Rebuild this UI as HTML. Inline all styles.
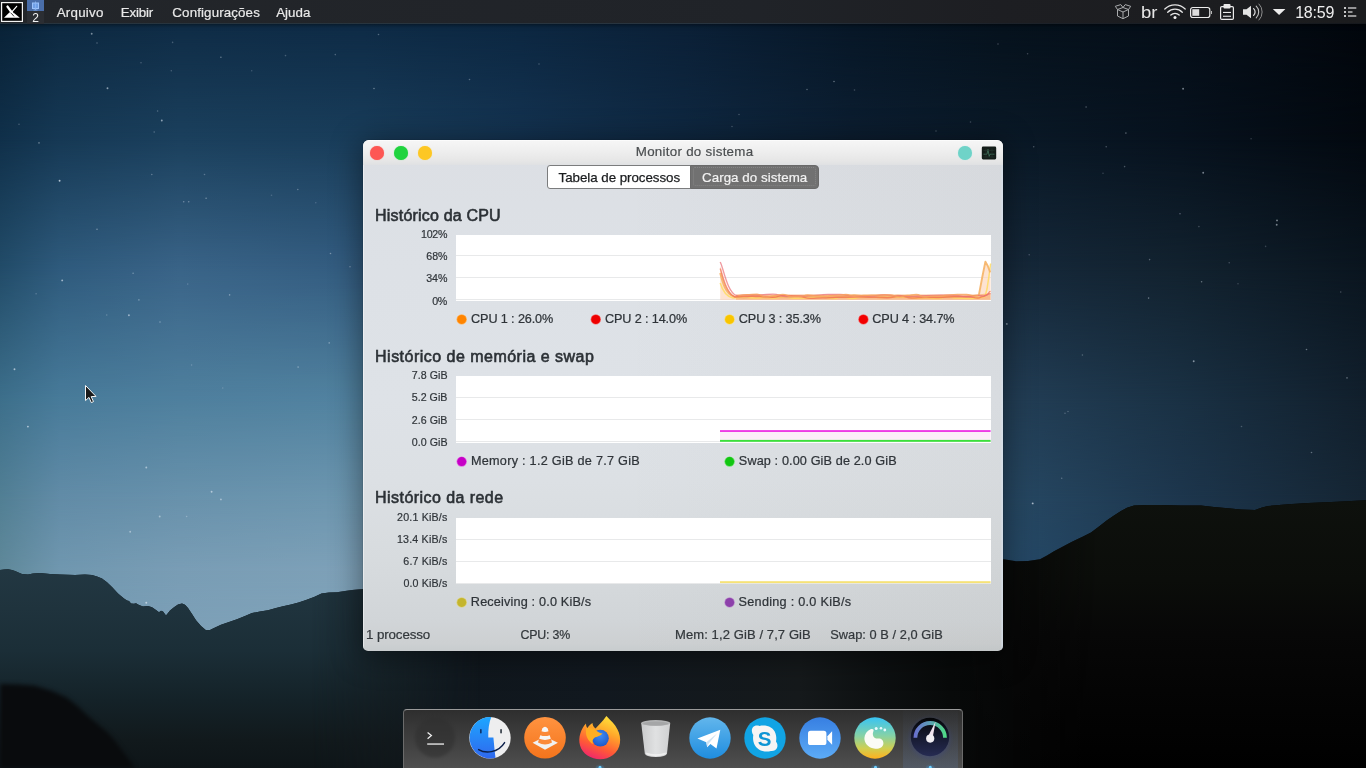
<!DOCTYPE html>
<html lang="pt-BR">
<head>
<meta charset="utf-8">
<title>Monitor do sistema</title>
<style>
html,body{margin:0;padding:0;}
body{width:1366px;height:768px;overflow:hidden;position:relative;background:#0a1622;font-family:"Liberation Sans","DejaVu Sans",sans-serif;font-size:13.33px;color:#31363b;}
#bg{position:absolute;left:0;top:0;width:1366px;height:768px;overflow:hidden;}
.sky{position:absolute;left:0;top:0;width:1366px;height:768px;}
.abs{position:absolute;}
.t{position:absolute;white-space:nowrap;line-height:1;}
#panel,#win,#dock{will-change:transform;}
</style>
</head>
<body>

<div id="bg">
<div class="sky" style="background:linear-gradient(to right, #092237 0px, #0d2941 60px, #0f2c46 180px, #0e2b46 363px, #0c2741 520px, #0b2037 683px, #071727 850px, #06121d 1003px, #050e18 1180px, #02060c 1366px);"></div>
<div class="sky" style="background:linear-gradient(to right, #10304a 0px, #163955 60px, #1b405d 180px, #193d5a 363px, #143351 520px, #0f2841 683px, #0c1e31 850px, #0a1927 1003px, #07121e 1180px, #030910 1366px);-webkit-mask-image:linear-gradient(to bottom, transparent 24px, #000 140px);mask-image:linear-gradient(to bottom, transparent 24px, #000 140px);"></div>
<div class="sky" style="background:linear-gradient(to right, #224c69 0px, #2f5b7d 60px, #3a6488 180px, #335c80 363px, #274f70 520px, #1c3d5a 683px, #172f46 850px, #16293b 1003px, #12222f 1180px, #0a151f 1366px);-webkit-mask-image:linear-gradient(to bottom, transparent 140px, #000 270px);mask-image:linear-gradient(to bottom, transparent 140px, #000 270px);"></div>
<div class="sky" style="background:linear-gradient(to right, #3d6f8b 0px, #487b9a 60px, #4f809e 180px, #5283a0 363px, #436f8d 520px, #305877 683px, #26465f 850px, #233f57 1003px, #1a3144 1180px, #111f2c 1366px);-webkit-mask-image:linear-gradient(to bottom, transparent 270px, #000 400px);mask-image:linear-gradient(to bottom, transparent 270px, #000 400px);"></div>
<div class="sky" style="background:linear-gradient(to right, #527f94 0px, #628ca7 60px, #6992ac 180px, #6e97b0 363px, #608aa6 520px, #47728f 683px, #305671 850px, #274964 1003px, #1d364d 1180px, #152533 1366px);-webkit-mask-image:linear-gradient(to bottom, transparent 400px, #000 500px);mask-image:linear-gradient(to bottom, transparent 400px, #000 500px);"></div>
<div class="sky" style="background:linear-gradient(to right, #5f8899 0px, #7097af 60px, #799db5 180px, #7ea1b8 363px, #7399b3 520px, #55809d 683px, #35607c 850px, #264a68 1003px, #1c3751 1180px, #152736 1366px);-webkit-mask-image:linear-gradient(to bottom, transparent 500px, #000 570px);mask-image:linear-gradient(to bottom, transparent 500px, #000 570px);"></div>
<div class="sky" style="background:linear-gradient(to right, #6b93a5 0px, #7fa2ba 60px, #86a8be 180px, #8aabc0 363px, #7fa2ba 520px, #5d87a3 683px, #38668a 850px, #284c6c 1003px, #1d3953 1180px, #162838 1366px);-webkit-mask-image:linear-gradient(to bottom, transparent 570px, #000 768px);mask-image:linear-gradient(to bottom, transparent 570px, #000 768px);"></div>
<svg class="abs" style="left:0;top:0" width="1366" height="768" viewBox="0 0 1366 768">
<defs>
<linearGradient id="mL" x1="0" y1="569" x2="0" y2="768" gradientUnits="userSpaceOnUse">
<stop offset="0" stop-color="#223742"/><stop offset="0.2" stop-color="#1f333d"/><stop offset="0.41" stop-color="#1b2e37"/><stop offset="0.66" stop-color="#142228"/><stop offset="0.86" stop-color="#11191c"/><stop offset="1" stop-color="#0e1518"/>
</linearGradient>
<linearGradient id="mH" x1="310" y1="0" x2="480" y2="0" gradientUnits="userSpaceOnUse">
<stop offset="0" stop-color="#fff"/><stop offset="1" stop-color="#000"/>
</linearGradient>
<linearGradient id="mB" x1="0" y1="0" x2="1366" y2="0" gradientUnits="userSpaceOnUse">
<stop offset="0" stop-color="#121a1f"/><stop offset="0.278" stop-color="#13191d"/><stop offset="0.33" stop-color="#10171d"/><stop offset="0.44" stop-color="#11181f"/><stop offset="0.585" stop-color="#15191b"/><stop offset="0.645" stop-color="#0d1011"/><stop offset="0.695" stop-color="#080a0a"/><stop offset="0.77" stop-color="#070707"/><stop offset="1" stop-color="#030303"/>
</linearGradient>
<linearGradient id="mR" x1="0" y1="500" x2="0" y2="768" gradientUnits="userSpaceOnUse">
<stop offset="0" stop-color="#0e110d"/><stop offset="0.3" stop-color="#0b0d0a"/><stop offset="0.5" stop-color="#070707"/><stop offset="1" stop-color="#000000"/>
</linearGradient>
<linearGradient id="mRH" x1="960" y1="0" x2="1100" y2="0" gradientUnits="userSpaceOnUse">
<stop offset="0" stop-color="#000"/><stop offset="1" stop-color="#fff"/>
</linearGradient>
<mask id="mkL" maskUnits="userSpaceOnUse" x="0" y="500" width="1366" height="268"><rect x="0" y="500" width="1366" height="268" fill="url(#mH)"/></mask>
<mask id="mkR" maskUnits="userSpaceOnUse" x="0" y="490" width="1366" height="278"><rect x="0" y="490" width="1366" height="278" fill="url(#mRH)"/></mask>
</defs>
<g fill="#dfe9f4">
<circle cx="91.7" cy="33.8" r="0.95" opacity="0.51"/>
<circle cx="97.0" cy="43.0" r="0.8" opacity="0.30"/>
<circle cx="172.6" cy="42.4" r="0.8" opacity="0.26"/>
<circle cx="220.9" cy="57.2" r="0.8" opacity="0.42"/>
<circle cx="141.0" cy="62.7" r="0.8" opacity="0.26"/>
<circle cx="171.3" cy="70.7" r="0.8" opacity="0.26"/>
<circle cx="285.5" cy="55.6" r="0.8" opacity="0.26"/>
<circle cx="335.3" cy="54.6" r="0.8" opacity="0.30"/>
<circle cx="107.5" cy="88.3" r="0.95" opacity="0.59"/>
<circle cx="157.6" cy="111.0" r="0.8" opacity="0.30"/>
<circle cx="161.8" cy="120.5" r="0.95" opacity="0.59"/>
<circle cx="154.2" cy="132.0" r="0.8" opacity="0.30"/>
<circle cx="19.0" cy="124.2" r="0.8" opacity="0.26"/>
<circle cx="39.0" cy="142.9" r="0.8" opacity="0.42"/>
<circle cx="59.6" cy="180.8" r="0.95" opacity="0.77"/>
<circle cx="151.8" cy="174.5" r="0.8" opacity="0.34"/>
<circle cx="204.5" cy="174.5" r="0.8" opacity="0.30"/>
<circle cx="183.7" cy="201.7" r="0.8" opacity="0.38"/>
<circle cx="188.7" cy="201.7" r="0.8" opacity="0.38"/>
<circle cx="206.1" cy="198.2" r="0.8" opacity="0.42"/>
<circle cx="297.8" cy="189.5" r="0.8" opacity="0.34"/>
<circle cx="271.5" cy="195.3" r="0.8" opacity="0.21"/>
<circle cx="315.8" cy="202.7" r="0.8" opacity="0.21"/>
<circle cx="251.7" cy="70.7" r="0.8" opacity="0.21"/>
<circle cx="97.0" cy="229.3" r="0.8" opacity="0.42"/>
<circle cx="62.2" cy="280.4" r="0.95" opacity="0.64"/>
<circle cx="133.1" cy="273.3" r="0.8" opacity="0.38"/>
<circle cx="138.9" cy="299.9" r="0.8" opacity="0.38"/>
<circle cx="128.9" cy="315.2" r="0.95" opacity="0.59"/>
<circle cx="160.0" cy="322.0" r="0.8" opacity="0.38"/>
<circle cx="229.6" cy="294.9" r="0.8" opacity="0.42"/>
<circle cx="330.5" cy="253.5" r="0.8" opacity="0.42"/>
<circle cx="350.0" cy="266.7" r="0.8" opacity="0.38"/>
<circle cx="329.2" cy="342.9" r="0.8" opacity="0.38"/>
<circle cx="298.1" cy="367.1" r="0.8" opacity="0.42"/>
<circle cx="14.5" cy="369.2" r="0.95" opacity="0.68"/>
<circle cx="191.6" cy="365.0" r="0.8" opacity="0.26"/>
<circle cx="222.7" cy="388.0" r="0.8" opacity="0.21"/>
<circle cx="36.1" cy="293.8" r="0.8" opacity="0.26"/>
<circle cx="106.7" cy="315.0" r="0.8" opacity="0.26"/>
<circle cx="187.7" cy="284.1" r="0.8" opacity="0.21"/>
<circle cx="27.9" cy="426.6" r="0.95" opacity="0.68"/>
<circle cx="146.3" cy="467.5" r="0.95" opacity="0.59"/>
<circle cx="211.6" cy="491.7" r="0.95" opacity="0.64"/>
<circle cx="220.9" cy="499.4" r="0.95" opacity="0.51"/>
<circle cx="159.7" cy="516.5" r="0.95" opacity="0.51"/>
<circle cx="186.6" cy="516.5" r="0.8" opacity="0.34"/>
<circle cx="130.2" cy="531.8" r="0.95" opacity="0.51"/>
<circle cx="146.3" cy="602.7" r="0.95" opacity="0.68"/>
<circle cx="1027.6" cy="53.8" r="0.8" opacity="0.26"/>
<circle cx="1183.1" cy="88.8" r="0.95" opacity="0.51"/>
<circle cx="1086.1" cy="107.0" r="0.8" opacity="0.34"/>
<circle cx="1125.9" cy="133.1" r="0.8" opacity="0.38"/>
<circle cx="1106.2" cy="146.8" r="0.8" opacity="0.30"/>
<circle cx="1033.7" cy="146.8" r="0.8" opacity="0.30"/>
<circle cx="1124.6" cy="166.6" r="0.8" opacity="0.30"/>
<circle cx="1203.2" cy="172.7" r="0.95" opacity="0.51"/>
<circle cx="1180.0" cy="213.8" r="0.8" opacity="0.34"/>
<circle cx="1277.0" cy="220.4" r="0.95" opacity="0.51"/>
<circle cx="1103.0" cy="173.2" r="0.8" opacity="0.21"/>
<circle cx="1251.1" cy="138.7" r="0.8" opacity="0.21"/>
<circle cx="1276.7" cy="224.8" r="0.95" opacity="0.51"/>
<circle cx="1149.6" cy="259.6" r="0.8" opacity="0.34"/>
<circle cx="1201.6" cy="281.7" r="0.8" opacity="0.42"/>
<circle cx="1148.6" cy="298.1" r="0.8" opacity="0.42"/>
<circle cx="1029.2" cy="254.8" r="0.8" opacity="0.26"/>
<circle cx="1006.8" cy="323.9" r="0.95" opacity="0.51"/>
<circle cx="1082.4" cy="355.0" r="0.8" opacity="0.30"/>
<circle cx="1193.7" cy="361.3" r="0.95" opacity="0.55"/>
<circle cx="1306.5" cy="349.5" r="0.8" opacity="0.42"/>
<circle cx="1347.0" cy="377.9" r="0.8" opacity="0.38"/>
<circle cx="1065.0" cy="413.2" r="0.8" opacity="0.26"/>
<circle cx="1229.2" cy="262.7" r="0.8" opacity="0.26"/>
<circle cx="1265.6" cy="246.4" r="0.8" opacity="0.21"/>
<circle cx="1238.0" cy="283.8" r="0.8" opacity="0.21"/>
<circle cx="1340.7" cy="292.0" r="0.8" opacity="0.26"/>
<circle cx="1198.9" cy="226.6" r="0.8" opacity="0.26"/>
<circle cx="834.0" cy="81.5" r="0.8" opacity="0.42"/>
<circle cx="807.0" cy="89.5" r="0.8" opacity="0.34"/>
<circle cx="854.5" cy="90.0" r="0.8" opacity="0.26"/>
<circle cx="998.0" cy="44.0" r="0.8" opacity="0.26"/>
<circle cx="970.5" cy="122.0" r="0.8" opacity="0.26"/>
<circle cx="739.0" cy="114.5" r="0.8" opacity="0.26"/>
<circle cx="732.0" cy="126.5" r="0.8" opacity="0.26"/>
<circle cx="936.0" cy="131.0" r="0.8" opacity="0.26"/>
<circle cx="378.5" cy="34.5" r="0.8" opacity="0.34"/>
<circle cx="469.5" cy="79.5" r="0.8" opacity="0.34"/>
<circle cx="374.0" cy="88.5" r="0.8" opacity="0.42"/>
<circle cx="539.0" cy="64.0" r="0.8" opacity="0.26"/>
<circle cx="1032.7" cy="503.4" r="0.95" opacity="0.72"/>
<circle cx="1061.7" cy="478.2" r="0.8" opacity="0.30"/>
<circle cx="1311.5" cy="452.5" r="0.8" opacity="0.38"/>
<circle cx="1068.0" cy="411.5" r="0.8" opacity="0.26"/>
<circle cx="1241.5" cy="426.5" r="0.8" opacity="0.26"/>
</g>
<path fill="url(#mB)" d="M0,570 L4,569.5 L8,569.3 L12,570 L15,571 L19,572.8 L22,574 L28,574.6 L33,573.4 L40,573 L50,574 L60,574.6 L75,575 L85,574.6 L92,575 L97,576.4 L102,578.6 L107,582.2 L112,587 L118,593.5 L124,598.6 L127,600.5 L129,601 L131,603.4 L134,603.8 L136,603.2 L139,605 L143,606.5 L148,606 L152,607.2 L156,610 L159,612.3 L161,610.8 L163,611.6 L166,615.4 L170,610.6 L174,607.2 L178,604.4 L182,603.5 L185,604.8 L188,608 L192,614 L196,620.2 L201,626 L206,630.3 L210,630 L214,628 L221,624.8 L229,622 L237,619.2 L245,616 L252,613 L260,611.5 L268,610.2 L276,608 L283,606.2 L291,604.4 L298.5,602.6 L306,600 L314,597 L321.5,593.4 L329,592.6 L337,592.3 L345,591 L352,590 L363,589 L420,585 L520,590 L700,590 L900,575 L1004,559.2 L1016,561.3 L1028,561 L1040,559.2 L1047,555.6 L1054,551.2 L1063,546.4 L1072,541.8 L1082,537 L1091,532.4 L1099,526.6 L1107,520.3 L1114,515.4 L1121,511 L1127,507.8 L1134,505.6 L1147,505 L1161,505 L1181,505.6 L1201,505.6 L1214,507 L1228,508.3 L1241,509.6 L1255,510 L1262,507.6 L1268,506 L1288,504.2 L1308,503 L1337,501.8 L1366,500.2 L1366,768 L0,768 Z"/>
<path fill="url(#mR)" mask="url(#mkR)" d="M0,570 L4,569.5 L8,569.3 L12,570 L15,571 L19,572.8 L22,574 L28,574.6 L33,573.4 L40,573 L50,574 L60,574.6 L75,575 L85,574.6 L92,575 L97,576.4 L102,578.6 L107,582.2 L112,587 L118,593.5 L124,598.6 L127,600.5 L129,601 L131,603.4 L134,603.8 L136,603.2 L139,605 L143,606.5 L148,606 L152,607.2 L156,610 L159,612.3 L161,610.8 L163,611.6 L166,615.4 L170,610.6 L174,607.2 L178,604.4 L182,603.5 L185,604.8 L188,608 L192,614 L196,620.2 L201,626 L206,630.3 L210,630 L214,628 L221,624.8 L229,622 L237,619.2 L245,616 L252,613 L260,611.5 L268,610.2 L276,608 L283,606.2 L291,604.4 L298.5,602.6 L306,600 L314,597 L321.5,593.4 L329,592.6 L337,592.3 L345,591 L352,590 L363,589 L420,585 L520,590 L700,590 L900,575 L1004,559.2 L1016,561.3 L1028,561 L1040,559.2 L1047,555.6 L1054,551.2 L1063,546.4 L1072,541.8 L1082,537 L1091,532.4 L1099,526.6 L1107,520.3 L1114,515.4 L1121,511 L1127,507.8 L1134,505.6 L1147,505 L1161,505 L1181,505.6 L1201,505.6 L1214,507 L1228,508.3 L1241,509.6 L1255,510 L1262,507.6 L1268,506 L1288,504.2 L1308,503 L1337,501.8 L1366,500.2 L1366,768 L0,768 Z"/>
<path fill="url(#mL)" mask="url(#mkL)" d="M0,570 L4,569.5 L8,569.3 L12,570 L15,571 L19,572.8 L22,574 L28,574.6 L33,573.4 L40,573 L50,574 L60,574.6 L75,575 L85,574.6 L92,575 L97,576.4 L102,578.6 L107,582.2 L112,587 L118,593.5 L124,598.6 L127,600.5 L129,601 L131,603.4 L134,603.8 L136,603.2 L139,605 L143,606.5 L148,606 L152,607.2 L156,610 L159,612.3 L161,610.8 L163,611.6 L166,615.4 L170,610.6 L174,607.2 L178,604.4 L182,603.5 L185,604.8 L188,608 L192,614 L196,620.2 L201,626 L206,630.3 L210,630 L214,628 L221,624.8 L229,622 L237,619.2 L245,616 L252,613 L260,611.5 L268,610.2 L276,608 L283,606.2 L291,604.4 L298.5,602.6 L306,600 L314,597 L321.5,593.4 L329,592.6 L337,592.3 L345,591 L352,590 L363,589 L420,585 L520,590 L700,590 L700,768 L0,768 Z"/>
<path fill="#090b0d" d="M0,684 L18,684.4 L35,685.7 L52,691 L67,697.7 L78,706.6 L88,716 L98,724.6 L107,732 L113,738.6 L118,745 L127,757 L135,768 L0,768 Z" style="filter:blur(2.2px)"/>
</svg>

</div>
<div id="panel" class="abs" style="left:0;top:0;width:1366px;height:24px;background:linear-gradient(to right,#23262a 0px,#212429 500px,#202328 760px,#1d1e22 1000px,#1b1c1e 1366px);box-shadow:0 0 4px 1px rgba(0,0,0,.5);">
<div id="pline" class="abs" style="left:0;top:23px;width:1366px;height:1px;background:linear-gradient(to right,#27343e 0px,#28353f 400px,#283440 720px,#1c222a 1000px,#15181d 1366px);"></div>
<svg class="abs" style="left:0;top:0" width="1366" height="24" viewBox="0 0 1366 24">
<!-- MX logo -->
<rect x="1.6" y="2.6" width="20.8" height="18.8" fill="#000" stroke="#f4f4f4" stroke-width="1.2"/>
<path d="M4,17.7 L9.6,12.3 L12.2,14.6 L14.3,13.2 L19.8,17.7 Z" fill="#fff"/>
<path d="M7.5,6.6 L13.4,14.8" stroke="#fff" stroke-width="2.4" stroke-linecap="round"/>
<path d="M16.7,6.3 L12.1,11.6" stroke="#fff" stroke-width="1.2" stroke-linecap="round"/>
<path d="M11.3,13.2 L14,16.4" stroke="#000" stroke-width=".8"/>
<!-- pager -->
<rect x="27" y="0" width="17" height="11" fill="#4a6ea9"/>
<rect x="27" y="11" width="17" height="13" fill="#2b2e33"/>
<rect x="32.5" y="3" width="6" height="5.5" fill="#6f9fe6" stroke="#9cc3fb" stroke-width="1"/>
<path d="M35.5,1.5 V10 M33.5,10 H37.5" stroke="#8db6f3" stroke-width=".8"/>
<!-- box icon -->
<g fill="none" stroke="#a9abad" stroke-width="1" stroke-linejoin="round">
<path d="M1117.5,9.5 L1123,12 L1128.5,9.5 L1128.5,16 L1123,18.7 L1117.5,16 Z"/>
<path d="M1123,12 V18.7"/>
<path d="M1117.5,9.5 L1115.3,6.3 L1120.8,4.6 L1123,7.5 L1125.2,4.6 L1130.7,6.3 L1128.5,9.5"/>
<path d="M1117.5,9.5 L1123,7.5 L1128.5,9.5"/>
</g>
<!-- wifi -->
<g fill="none" stroke="#e6e6e6" stroke-width="1.3" stroke-linecap="round">
<path d="M1164.8,9 A14.5,14.5 0 0 1 1185.2,9"/>
<path d="M1167.7,12.2 A10.3,10.3 0 0 1 1182.3,12.2"/>
<path d="M1170.8,15 A6,6 0 0 1 1179.2,15"/>
</g>
<circle cx="1175" cy="17.4" r="1.5" fill="#f2f2f2"/>
<!-- battery -->
<rect x="1190.6" y="7.5" width="19.2" height="10" rx="2.2" fill="none" stroke="#ececec" stroke-width="1.2"/>
<rect x="1192.3" y="9.2" width="6.9" height="6.6" fill="#dcdcdc"/>
<rect x="1211" y="11" width="1" height="3" fill="#b5b5b5"/>
<!-- clipboard -->
<rect x="1220.6" y="6.6" width="12.8" height="12.8" rx="1.2" fill="none" stroke="#ececec" stroke-width="1.2"/>
<rect x="1223.5" y="4" width="7" height="4.6" rx="1" fill="#e8e8e8"/>
<rect x="1223" y="11.9" width="8" height="1.1" fill="#ececec"/><rect x="1223" y="15.7" width="8" height="1.1" fill="#ececec"/>
<!-- volume -->
<path d="M1243,9.3 H1246.5 L1251,5.8 V18.2 L1246.5,14.7 H1243 Z" fill="#e4e4e4"/>
<g fill="none" stroke-linecap="round">
<path d="M1253.6,8.6 A4.6,4.6 0 0 1 1253.6,15.4" stroke="#e2e2e2" stroke-width="1.2"/>
<path d="M1256.2,6.2 A8,8 0 0 1 1256.2,17.8" stroke="#c4c4c4" stroke-width="1.1"/>
<path d="M1259,4 A11.4,11.4 0 0 1 1259,20" stroke="#8e8e8e" stroke-width="1"/>
</g>
<!-- arrow -->
<path d="M1272.8,8.9 H1285.4 L1279.1,15 Z" fill="#ececec"/>
<!-- menu -->
<g fill="#c9c9c9">
<rect x="1344" y="7" width="2" height="2"/><rect x="1348" y="7.3" width="8.3" height="1.4"/>
<rect x="1344" y="11" width="2" height="2"/><rect x="1348" y="11.3" width="4.5" height="1.4"/>
<rect x="1344" y="15" width="2" height="2"/><rect x="1348" y="15.3" width="8.3" height="1.4"/>
</g>
</svg>
<span class="t" style="left:56.74px;top:6px;font-size:13.33px;color:#e9e9e9;letter-spacing:0.24px;-webkit-text-stroke:0.2px #e9e9e9;">Arquivo</span>
<span class="t" style="left:120.79px;top:6px;font-size:13.33px;color:#e9e9e9;letter-spacing:-0.19px;-webkit-text-stroke:0.2px #e9e9e9;">Exibir</span>
<span class="t" style="left:172.33px;top:6px;font-size:13.33px;color:#e9e9e9;letter-spacing:0.13px;-webkit-text-stroke:0.2px #e9e9e9;">Configurações</span>
<span class="t" style="left:276.14px;top:6px;font-size:13.33px;color:#e9e9e9;letter-spacing:0.05px;-webkit-text-stroke:0.2px #e9e9e9;">Ajuda</span>
<span class="t" style="left:1141.36px;top:4px;font-size:17px;color:#e6e6e6;display:inline-block;transform:scaleX(1.09);transform-origin:1px 0;">br</span>
<span class="t" style="left:1295.16px;top:5px;font-size:16px;color:#efefef;letter-spacing:-0.23px;">18:59</span>
<span class="t" style="left:32.37px;top:12px;font-size:12px;color:#f4f4f4;">2</span>
</div>

<div id="win" class="abs" style="left:363px;top:140px;width:640px;height:511px;border-radius:6px 6px 5px 5px;background:linear-gradient(to right,rgba(60,50,30,0) 0px,rgba(60,50,30,0) 250px,rgba(60,50,30,.035) 640px),linear-gradient(to bottom,#dcdfe4 0px,#dde1e6 130px,#dee2e7 260px,#dce0e4 340px,#d7dbde 420px,#d1d5d8 480px,#cdd0d2 503px,#c8ccce 511px);box-shadow:0 4px 30px 3px rgba(0,0,0,.42),0 0 1px rgba(0,0,0,.7);overflow:hidden;">
<div class="abs" style="left:0;top:0;width:640px;height:25px;background:linear-gradient(to bottom,#ffffff 0px,#f5f5f5 1.5px,#f1f1f1 8px,#e6e6e6 21px,#e0e1e3 25px);"></div>
<div class="abs" style="left:0;top:25px;width:1px;height:486px;background:rgba(255,255,255,.45);"></div>
<div class="abs" style="left:638px;top:25px;width:2px;height:486px;background:linear-gradient(to right,rgba(214,226,240,.25),rgba(214,226,240,.6));"></div>
<div class="abs" style="left:7px;top:6px;width:14px;height:14px;border-radius:50%;background:#fd5754;box-shadow:0 0 1px #f9807c;"></div>
<div class="abs" style="left:31px;top:6px;width:14px;height:14px;border-radius:50%;background:#20d33f;box-shadow:0 0 1px #5fe075;"></div>
<div class="abs" style="left:55px;top:6px;width:14px;height:14px;border-radius:50%;background:#fdc724;box-shadow:0 0 1px #fbd96a;"></div>
<div class="abs" style="left:595px;top:6px;width:14px;height:14px;border-radius:50%;background:#6fd3c8;box-shadow:0 0 1px #a5e6df;"></div>
<svg class="abs" style="left:618px;top:6px" width="16" height="14" viewBox="0 0 16 14"><rect x="0.8" y="0.6" width="14.4" height="12.8" rx="1.3" fill="#141d19"/><path d="M2.5,8.2 H6 L7,3.4 L8.2,10.4 L9,8.2 H13.5" fill="none" stroke="#3e6e58" stroke-width=".9"/><path d="M2.5,4.5 H13.5 M2.5,11 H13.5 M5,2.5 V11.5 M11,2.5 V11.5" stroke="#26382f" stroke-width=".6"/></svg>
<span class="t" style="left:272.75px;top:5px;font-size:13.33px;color:#4b4e50;letter-spacing:0.28px;-webkit-text-stroke:0.2px #4b4e50;">Monitor do sistema</span>
<div class="abs" style="left:184px;top:25px;width:144px;height:24px;box-sizing:border-box;border:1px solid #7b7c7d;border-radius:3px 0 0 3px;background:#ffffff;"></div>
<div class="abs" style="left:327px;top:25px;width:129px;height:24px;box-sizing:border-box;border-radius:0 4px 4px 0;background:#717171;border:1px solid #6a6a6a;"></div>
<div class="abs" style="left:330px;top:27px;width:123px;height:19px;box-sizing:border-box;border:1px dotted rgba(150,150,150,.55);border-radius:2px;"></div>
<span class="t" style="left:195.57px;top:31px;font-size:13.33px;color:#1a1c1e;letter-spacing:-0.04px;-webkit-text-stroke:0.25px #1a1c1e;">Tabela de processos</span>
<span class="t" style="left:339.02px;top:31px;font-size:13.33px;color:#f3f3f3;letter-spacing:0.05px;-webkit-text-stroke:0.2px #f3f3f3;">Carga do sistema</span>
<span class="t" style="left:12.07px;top:68px;font-size:16px;color:#2c3136;letter-spacing:0.19px;-webkit-text-stroke:0.6px #2c3136;">Histórico da CPU</span>
<span class="t" style="left:12.07px;top:209px;font-size:16px;color:#2c3136;letter-spacing:0.48px;-webkit-text-stroke:0.6px #2c3136;">Histórico de memória e swap</span>
<span class="t" style="left:12.07px;top:350px;font-size:16px;color:#2c3136;letter-spacing:0.44px;-webkit-text-stroke:0.6px #2c3136;">Histórico da rede</span>
<div class="abs chart" style="left:93px;top:95px;width:535px;height:66px;background:#fff;"></div>
<span class="t" style="left:58.09px;top:89px;font-size:10.67px;color:#30353a;letter-spacing:-0.31px;-webkit-text-stroke:0.2px #30353a;">102%</span>
<span class="t" style="left:63.29px;top:111px;font-size:10.67px;color:#30353a;letter-spacing:-0.07px;-webkit-text-stroke:0.2px #30353a;">68%</span>
<span class="t" style="left:63.26px;top:133px;font-size:10.67px;color:#30353a;letter-spacing:-0.06px;-webkit-text-stroke:0.2px #30353a;">34%</span>
<span class="t" style="left:69.28px;top:156px;font-size:10.67px;color:#30353a;letter-spacing:-0.56px;-webkit-text-stroke:0.2px #30353a;">0%</span>
<div class="abs chart" style="left:93px;top:236px;width:535px;height:67px;background:#fff;"></div>
<span class="t" style="left:48.67px;top:230px;font-size:10.67px;color:#30353a;letter-spacing:0.05px;-webkit-text-stroke:0.2px #30353a;">7.8 GiB</span>
<span class="t" style="left:48.70px;top:252px;font-size:10.67px;color:#30353a;letter-spacing:0.04px;-webkit-text-stroke:0.2px #30353a;">5.2 GiB</span>
<span class="t" style="left:48.71px;top:275px;font-size:10.67px;color:#30353a;letter-spacing:0.04px;-webkit-text-stroke:0.2px #30353a;">2.6 GiB</span>
<span class="t" style="left:48.78px;top:297px;font-size:10.67px;color:#30353a;letter-spacing:0.03px;-webkit-text-stroke:0.2px #30353a;">0.0 GiB</span>
<div class="abs chart" style="left:93px;top:377.5px;width:535px;height:66px;background:#fff;"></div>
<span class="t" style="left:34.11px;top:372px;font-size:10.67px;color:#30353a;letter-spacing:0.17px;-webkit-text-stroke:0.2px #30353a;">20.1 KiB/s</span>
<span class="t" style="left:33.89px;top:394px;font-size:10.67px;color:#30353a;letter-spacing:0.2px;-webkit-text-stroke:0.2px #30353a;">13.4 KiB/s</span>
<span class="t" style="left:40.29px;top:416px;font-size:10.67px;color:#30353a;letter-spacing:0.17px;-webkit-text-stroke:0.2px #30353a;">6.7 KiB/s</span>
<span class="t" style="left:40.38px;top:438px;font-size:10.67px;color:#30353a;letter-spacing:0.16px;-webkit-text-stroke:0.2px #30353a;">0.0 KiB/s</span>
<svg class="abs" style="left:0;top:0" width="640" height="511" viewBox="363 140 640 511">
<rect x="456" y="255" width="535" height="1" fill="#e8e9ea"/>
<rect x="456" y="277" width="535" height="1" fill="#e8e9ea"/>
<rect x="456" y="299" width="535" height="1" fill="#e8e9ea"/>
<rect x="456" y="397" width="535" height="1" fill="#e8e9ea"/>
<rect x="456" y="419" width="535" height="1" fill="#e8e9ea"/>
<rect x="456" y="441" width="535" height="1" fill="#e8e9ea"/>
<rect x="456" y="539" width="535" height="1" fill="#e8e9ea"/>
<rect x="456" y="561" width="535" height="1" fill="#e8e9ea"/>
<rect x="456" y="583" width="535" height="1" fill="#e8e9ea"/>
<!-- CPU history -->
<g fill="none" stroke-linejoin="round" stroke-linecap="butt">
<path d="M720.2,266 C723,270 726,291 734,295.5 L978.6,295.5 L981,285 L985.4,262 L989.8,271.8 L990.6,264 L990.6,300 L720.2,300 Z" fill="#fbd0b4" stroke="none" opacity=".6"/>
<path d="M736,294.6 L978,294.6 L990.6,293 L990.6,299.8 L736,299.8 Z" fill="#f9b27a" stroke="none" opacity=".8"/>
<path d="M720.2,283 C722,289 725,296.5 733,298 L744.0,296.9 C749.7,296.9 749.7,298.1 755.4,298.1 C759.9,298.1 759.9,297.6 764.4,297.6 C769.3,297.6 769.3,297.9 774.2,297.9 C779.8,297.9 779.8,296.8 785.4,296.8 C789.4,296.8 789.4,298.3 793.5,298.3 C798.3,298.3 798.3,298.1 803.2,298.1 C807.2,298.1 807.2,297.5 811.2,297.5 C816.7,297.5 816.7,297.1 822.1,297.1 C828.0,297.1 828.0,298.4 833.9,298.4 C837.9,298.4 837.9,296.7 842.0,296.7 C847.1,296.7 847.1,298.5 852.2,298.5 C856.9,298.5 856.9,297.0 861.7,297.0 C866.5,297.0 866.5,296.7 871.4,296.7 C875.8,296.7 875.8,297.5 880.3,297.5 C885.3,297.5 885.3,297.1 890.3,297.1 C894.7,297.1 894.7,297.0 899.2,297.0 C904.1,297.0 904.1,297.2 909.0,297.2 C913.1,297.2 913.1,298.3 917.1,298.3 C922.2,298.3 922.2,297.9 927.3,297.9 C931.7,297.9 931.7,298.6 936.1,298.6 C941.8,298.6 941.8,296.8 947.5,296.8 C952.2,296.8 952.2,298.0 956.8,298.0 C962.3,298.0 962.3,298.5 967.7,298.5 C970.8,298.5 970.8,298.3 974.0,298.3 C977.0,298.3 977.0,297.5 980.0,297.5 C982.5,297.5 982.5,296.4 985.0,296.4 L987,289 L989,276 L990.6,263.5" stroke="#ffdc62" stroke-width="1.5" opacity=".85"/>
<path d="M720.2,273 C722,280 725,294 734,296.6 L744.0,297.5 C750.4,297.5 750.4,295.3 756.8,295.3 C761.5,295.3 761.5,297.2 766.1,297.2 C772.1,297.2 772.1,296.8 778.1,296.8 C783.2,296.8 783.2,296.7 788.3,296.7 C794.0,296.7 794.0,296.6 799.7,296.6 C804.6,296.6 804.6,296.2 809.4,296.2 C814.7,296.2 814.7,296.9 819.9,296.9 C826.4,296.9 826.4,297.5 832.9,297.5 C838.5,297.5 838.5,296.3 844.1,296.3 C849.1,296.3 849.1,295.3 854.2,295.3 C858.7,295.3 858.7,296.3 863.3,296.3 C868.4,296.3 868.4,296.1 873.6,296.1 C879.8,296.1 879.8,296.5 886.1,296.5 C891.7,296.5 891.7,295.8 897.4,295.8 C901.9,295.8 901.9,296.0 906.5,296.0 C911.2,296.0 911.2,296.4 916.0,296.4 C922.5,296.4 922.5,296.8 929.0,296.8 C933.9,296.8 933.9,297.3 938.7,297.3 C944.8,297.3 944.8,297.0 950.9,297.0 C957.2,297.0 957.2,297.0 963.5,297.0 C967.8,297.0 967.8,296.0 972.0,296.0 C975.4,296.0 975.4,295.4 978.8,295.4 L982.3,277 L985.4,261.6 L987.8,266 L990.2,272.4" stroke="#f6b56c" stroke-width="1.9" opacity=".95"/>
<path d="M720.2,268.5 C722.5,275 725.5,293 735,297 L746.0,296.1 C752.6,296.1 752.6,296.5 759.2,296.5 C765.9,296.5 765.9,297.3 772.6,297.3 C778.2,297.3 778.2,295.4 783.9,295.4 C791.0,295.4 791.0,296.2 798.2,296.2 C804.2,296.2 804.2,298.4 810.1,298.4 C816.6,298.4 816.6,297.9 823.0,297.9 C829.5,297.9 829.5,297.3 835.9,297.3 C841.7,297.3 841.7,297.3 847.5,297.3 C854.8,297.3 854.8,297.0 862.0,297.0 C869.0,297.0 869.0,297.4 876.0,297.4 C881.6,297.4 881.6,297.7 887.2,297.7 C893.9,297.7 893.9,296.3 900.6,296.3 C906.2,296.3 906.2,298.0 911.7,298.0 C918.2,298.0 918.2,297.6 924.6,297.6 C931.9,297.6 931.9,297.5 939.1,297.5 C946.5,297.5 946.5,296.6 953.8,296.6 C960.9,296.6 960.9,296.7 968.0,296.7 C973.0,296.7 973.0,298.0 978.0,298.0 C980.5,298.0 980.5,296.6 983.0,296.6 C984.8,296.6 984.8,295.0 986.5,295.0 C988.5,295.0 988.5,291.4 990.6,291.4" stroke="#f2684a" stroke-width="1.4" opacity=".7"/>
<path d="M720.2,262 C723.5,268 727,292 736.5,295.6 L748.0,294.6 C754.2,294.6 754.2,295.0 760.4,295.0 C766.7,295.0 766.7,294.1 773.0,294.1 C779.8,294.1 779.8,296.5 786.6,296.5 C794.2,296.5 794.2,296.0 801.8,296.0 C808.3,296.0 808.3,295.4 814.7,295.4 C821.3,295.4 821.3,294.4 827.8,294.4 C834.0,294.4 834.0,294.5 840.3,294.5 C848.1,294.5 848.1,296.2 856.0,296.2 C863.6,296.2 863.6,296.1 871.2,296.1 C877.6,296.1 877.6,294.8 884.0,294.8 C891.2,294.8 891.2,295.9 898.5,295.9 C906.2,295.9 906.2,296.4 913.9,296.4 C920.1,296.4 920.1,295.6 926.2,295.6 C933.6,295.6 933.6,295.3 940.9,295.3 C947.3,295.3 947.3,295.2 953.6,295.2 C959.8,295.2 959.8,296.5 966.0,296.5 C972.0,296.5 972.0,295.4 978.0,295.4 C981.0,295.4 981.0,296.0 984.0,296.0 C987.3,296.0 987.3,293.6 990.6,293.6" stroke="#ea6f78" stroke-width="1.4" opacity=".7"/>
<path d="M738.0,295.7 C742.2,295.7 742.2,294.6 746.5,294.6 C751.7,294.6 751.7,294.2 757.0,294.2 C761.5,294.2 761.5,297.1 766.0,297.1 C769.6,297.1 769.6,296.0 773.3,296.0 C778.0,296.0 778.0,294.3 782.8,294.3 C787.0,294.3 787.0,296.5 791.3,296.5 C795.7,296.5 795.7,296.5 800.1,296.5 C803.9,296.5 803.9,295.0 807.7,295.0 C811.4,295.0 811.4,295.8 815.2,295.8 C820.5,295.8 820.5,296.1 825.9,296.1 C830.9,296.1 830.9,295.4 835.9,295.4 C840.9,295.4 840.9,294.5 845.9,294.5 C850.0,294.5 850.0,296.4 854.1,296.4 C859.0,296.4 859.0,295.5 864.0,295.5 C867.7,295.5 867.7,295.1 871.4,295.1 C875.3,295.1 875.3,295.1 879.2,295.1 C884.3,295.1 884.3,294.8 889.4,294.8 C894.7,294.8 894.7,297.0 900.0,297.0 C903.6,297.0 903.6,295.4 907.2,295.4 C911.7,295.4 911.7,294.3 916.2,294.3 C920.5,294.3 920.5,297.1 924.9,297.1 C928.6,297.1 928.6,296.1 932.3,296.1 C936.1,296.1 936.1,296.1 939.8,296.1 C945.1,296.1 945.1,294.8 950.4,294.8 C953.9,294.8 953.9,294.5 957.4,294.5 C962.0,294.5 962.0,294.3 966.6,294.3 C970.2,294.3 970.2,295.8 973.9,295.8 C976.0,295.8 976.0,295.5 978.0,295.5" stroke="#f7a45c" stroke-width="1.3" opacity=".8"/>
</g>
<!-- memory -->
<rect x="720" y="432" width="270.6" height="8" fill="#fcebf8"/>
<rect x="720" y="430.1" width="270.6" height="1.9" fill="#ee38e6"/>
<rect x="720" y="439.9" width="270.6" height="1.9" fill="#3be03b"/>
<!-- network -->
<rect x="720" y="581.2" width="270.6" height="1.9" fill="#f6e276"/>
<circle cx="461.7" cy="319.4" r="5.2" fill="#ffb45c"/><circle cx="461.7" cy="319.4" r="4.5" fill="#ff8400"/>
<circle cx="595.8" cy="319.4" r="5.2" fill="#f56a6a"/><circle cx="595.8" cy="319.4" r="4.5" fill="#ee0000"/>
<circle cx="729.6" cy="319.4" r="5.2" fill="#fbdd70"/><circle cx="729.6" cy="319.4" r="4.5" fill="#f8c500"/>
<circle cx="863.4" cy="319.4" r="5.2" fill="#f56a6a"/><circle cx="863.4" cy="319.4" r="4.5" fill="#f20000"/>
<circle cx="461.7" cy="461.6" r="5.2" fill="#e070e0"/><circle cx="461.7" cy="461.6" r="4.5" fill="#c600c6"/>
<circle cx="729.6" cy="461.6" r="5.2" fill="#70e070"/><circle cx="729.6" cy="461.6" r="4.5" fill="#12c612"/>
<circle cx="461.7" cy="602.4" r="5.2" fill="#dcd27c"/><circle cx="461.7" cy="602.4" r="4.5" fill="#c4b52e"/>
<circle cx="729.6" cy="602.4" r="5.2" fill="#b98acb"/><circle cx="729.6" cy="602.4" r="4.5" fill="#8c40aa"/>
</svg>
<span class="t" style="left:108.12px;top:173px;font-size:12.67px;color:#2f3439;letter-spacing:-0.13px;-webkit-text-stroke:0.22px #2f3439;">CPU 1 : 26.0%</span>
<span class="t" style="left:242.02px;top:173px;font-size:12.67px;color:#2f3439;letter-spacing:-0.13px;-webkit-text-stroke:0.22px #2f3439;">CPU 2 : 14.0%</span>
<span class="t" style="left:375.82px;top:173px;font-size:12.67px;color:#2f3439;letter-spacing:-0.13px;-webkit-text-stroke:0.22px #2f3439;">CPU 3 : 35.3%</span>
<span class="t" style="left:509.32px;top:173px;font-size:12.67px;color:#2f3439;letter-spacing:-0.12px;-webkit-text-stroke:0.22px #2f3439;">CPU 4 : 34.7%</span>
<span class="t" style="left:107.94px;top:315px;font-size:12.67px;color:#2f3439;letter-spacing:0.27px;-webkit-text-stroke:0.22px #2f3439;">Memory : 1.2 GiB de 7.7 GiB</span>
<span class="t" style="left:375.85px;top:315px;font-size:12.67px;color:#2f3439;letter-spacing:0.12px;-webkit-text-stroke:0.22px #2f3439;">Swap : 0.00 GiB de 2.0 GiB</span>
<span class="t" style="left:107.84px;top:456px;font-size:12.67px;color:#2f3439;letter-spacing:0.17px;-webkit-text-stroke:0.22px #2f3439;">Receiving : 0.0 KiB/s</span>
<span class="t" style="left:375.55px;top:456px;font-size:12.67px;color:#2f3439;letter-spacing:0.27px;-webkit-text-stroke:0.22px #2f3439;">Sending : 0.0 KiB/s</span>
<span class="t" style="left:3.01px;top:488px;font-size:13.33px;color:#33383c;letter-spacing:-0.11px;-webkit-text-stroke:0.22px #33383c;">1 processo</span>
<span class="t" style="left:157.54px;top:489px;font-size:12.4px;color:#33383c;letter-spacing:-0.2px;-webkit-text-stroke:0.22px #33383c;">CPU: 3%</span>
<span class="t" style="left:312.00px;top:488px;font-size:13.0px;color:#33383c;letter-spacing:0.1px;-webkit-text-stroke:0.22px #33383c;">Mem: 1,2 GiB / 7,7 GiB</span>
<span class="t" style="left:467.14px;top:489px;font-size:12.8px;color:#33383c;letter-spacing:0.05px;-webkit-text-stroke:0.22px #33383c;">Swap: 0 B / 2,0 GiB</span>
</div>
<div id="dock" class="abs" style="left:403px;top:709px;width:560px;height:59px;box-sizing:border-box;border-radius:4px 4px 0 0;border:1px solid #6b6b6b;border-top-color:#9a9a9a;border-bottom:none;background:linear-gradient(to bottom,#2e2e2e 0px,#3a3a3a 20px,#434343 38px,#505050 59px);">
<svg class="abs" style="left:-1px;top:-1px" width="560" height="59" viewBox="403 709 560 59">
<defs>
<linearGradient id="gFinL" x1="0" y1="0" x2="0" y2="1"><stop offset="0" stop-color="#1ea6ff"/><stop offset="1" stop-color="#2f68ee"/></linearGradient>
<linearGradient id="gVlc" x1="0" y1="0" x2="0" y2="1"><stop offset="0" stop-color="#ff9340"/><stop offset="1" stop-color="#f4741c"/></linearGradient>
<linearGradient id="gTg" x1="0" y1="0" x2="0" y2="1"><stop offset="0" stop-color="#62b6ec"/><stop offset="1" stop-color="#1f8ddf"/></linearGradient>
<linearGradient id="gZoom" x1="0" y1="0" x2="0" y2="1"><stop offset="0" stop-color="#377fe2"/><stop offset="1" stop-color="#5cabf6"/></linearGradient>
<linearGradient id="gMoon" x1="0" y1="0" x2="0" y2="1"><stop offset="0" stop-color="#38c4f4"/><stop offset=".45" stop-color="#86d2a6"/><stop offset=".75" stop-color="#cfcf52"/><stop offset="1" stop-color="#ffb01e"/></linearGradient>
<linearGradient id="gFx" x1="0.7" y1="0" x2="0.3" y2="1"><stop offset="0" stop-color="#ffe23a"/><stop offset=".35" stop-color="#ffa62a"/><stop offset=".7" stop-color="#ff5a36"/><stop offset="1" stop-color="#f0246e"/></linearGradient>
<radialGradient id="gGlobe" cx=".5" cy=".35" r=".7"><stop offset="0" stop-color="#3f8cf2"/><stop offset="1" stop-color="#1a55c8"/></radialGradient>
<linearGradient id="gArc" x1="914" y1="0" x2="946" y2="0" gradientUnits="userSpaceOnUse"><stop offset="0" stop-color="#6a6fd0"/><stop offset=".45" stop-color="#5d9ab8"/><stop offset="1" stop-color="#4fdc86"/></linearGradient>
<linearGradient id="gMon" x1="0" y1="0" x2="0" y2="1"><stop offset="0" stop-color="#050608"/><stop offset=".5" stop-color="#161a30"/><stop offset="1" stop-color="#262b52"/></linearGradient>
<linearGradient id="gTrash" x1="0" y1="0" x2="1" y2="0"><stop offset="0" stop-color="#c9cacb"/><stop offset=".5" stop-color="#e0e1e2"/><stop offset="1" stop-color="#cfd0d1"/></linearGradient>
<radialGradient id="gInd" cx=".5" cy="1" r="1"><stop offset="0" stop-color="#5cc8ff"/><stop offset=".35" stop-color="#3aa0e8" stop-opacity=".8"/><stop offset="1" stop-color="#3aa0e8" stop-opacity="0"/></radialGradient>
<linearGradient id="gAct" x1="0" y1="0" x2="0" y2="1"><stop offset="0" stop-color="#4a5a78" stop-opacity=".03"/><stop offset="1" stop-color="#5a7196" stop-opacity=".3"/></linearGradient>
</defs>
<!-- active app highlight -->
<rect x="903" y="710" width="55" height="58" fill="url(#gAct)"/>
<!-- terminal -->
<circle cx="435" cy="737.5" r="20" fill="#2f2f2f" opacity=".55" style="filter:blur(1.5px)"/>
<path d="M427.6,732.5 L431.4,735.6 L427.6,738.7" fill="none" stroke="#f0f0f0" stroke-width="1.25" stroke-linejoin="miter"/>
<rect x="427.2" y="743.4" width="16.8" height="1.3" fill="#f0f0f0"/>
<!-- finder -->
<circle cx="490" cy="737.8" r="20.7" fill="#eeeeef"/>
<path d="M491.3,717.1 A20.7,20.7 0 1 0 495.5,757.8 C494.5,750 494,744 493.4,737.6 L488.3,737.6 C488,730 489,722.5 491.3,717.1 Z" fill="url(#gFinL)"/>
<rect x="480.1" y="729" width="1.5" height="4.4" rx=".7" fill="#0c2a5c"/>
<rect x="500.3" y="729" width="1.5" height="4.4" rx=".7" fill="#1d2733"/>
<path d="M478.6,749.6 C485,753.6 498,753.4 504.6,742.6" fill="none" stroke="#0b1f4a" stroke-width="1.4" stroke-linecap="round"/>
<!-- vlc -->
<circle cx="545" cy="737.8" r="20.8" fill="url(#gVlc)"/>
<path d="M532.6,742.7 L545,736.5 L557.9,742.7 L545,749.8 Z" fill="#f1f1f1"/>
<path d="M538,742.5 L542.6,727.6 Q545,725.2 547.4,727.6 L552,742.5 Q545,746.5 538,742.5 Z" fill="#fb8a3a"/>
<path d="M542.3,728.6 Q545,725 547.7,728.6 L548.5,731.2 Q545,732.6 541.5,731.2 Z" fill="#f6f6f6"/>
<path d="M540.3,735.2 Q545,737 549.7,735.2 L550.8,738.8 Q545,741 539.2,738.8 Z" fill="#f6f6f6"/>
<!-- firefox -->
<path d="M606.4,716 C611,721 615,724 617.5,729.5 C622,738 621,749 613,755 C606,760.5 595,760.5 587.5,755.5 C580,750.5 577.5,741.5 580.5,733 C581.5,729.5 583.5,726 586,723.5 C586,725.5 586.5,727 587.5,728 C588.5,726 590.5,724 592.5,723 C592.5,725 593.5,727 595.5,728.5 C598,726 602,722 606.4,716 Z" fill="url(#gFx)"/>
<circle cx="600.4" cy="738.2" r="8.4" fill="url(#gGlobe)"/>
<path d="M586,728.5 C589,727 593,728 596,730.5 C598,732 600,733.5 602.5,733.5 C600,736.5 596.5,736.5 594.5,737.8 C592.5,739 592,741.5 593,744 C589,742 586.5,737.5 586,733.5 Z" fill="#ffae22"/>
<!-- trash -->
<path d="M641.2,723 L644.8,753.4 Q645.5,756.6 655.8,757 Q666.2,756.6 667,753.4 L670.2,723 Z" fill="url(#gTrash)"/>
<ellipse cx="655.7" cy="723" rx="14.5" ry="3" fill="#b4b5b6"/>
<ellipse cx="655.7" cy="723.6" rx="12.6" ry="2" fill="#a5a6a7"/>
<path d="M646,752.5 Q655.8,756 666,752.5 L665.6,754.4 Q655.8,757.6 646.3,754.4 Z" fill="#f2f2f2" opacity=".8"/>
<!-- telegram -->
<circle cx="710" cy="738" r="20.7" fill="url(#gTg)"/>
<path d="M697.4,738.6 L720.3,729.8 L716.5,748.6 L710.4,744 L707.2,747.2 L706.3,742.2 Z" fill="#ffffff"/>
<path d="M706.3,742.2 L717.3,733.2 L708.6,743.7 L707.2,747.2 Z" fill="#cfe3f3"/>
<!-- skype -->
<circle cx="765" cy="738" r="20.7" fill="#11a4e4"/>
<path d="M752,732 C751,727 755,724.5 759.5,726 C766,724.5 773.5,727 775.5,733.5 C776.5,736.5 776.5,739 776,741.5 C779.5,746 776.5,751.5 771,751 C764,753 756.5,750 754,743.5 C753,740.5 752.8,737.5 753.3,735 C752.5,734 752.2,733 752,732 Z" fill="#f7f5f4"/>
<text x="764.6" y="746" text-anchor="middle" font-family="'Liberation Sans',sans-serif" font-weight="bold" font-size="20.5" fill="#0f95d4">S</text>
<!-- zoom -->
<circle cx="820" cy="738" r="20.7" fill="url(#gZoom)"/>
<rect x="808" y="730.8" width="18.4" height="14.3" rx="2.6" fill="#ffffff"/>
<path d="M827.4,736.2 L832.1,731.2 L832.1,744.8 L827.4,739.8 Z" fill="#ffffff"/>
<!-- moon -->
<circle cx="875" cy="738" r="20.7" fill="url(#gMoon)"/>
<path d="M870.5,729.3 C872.5,728.3 874.2,729.2 873.5,731 C871.8,735 873.5,738.8 878,738.6 C881.5,738.4 883.5,740.5 883.4,743.5 C883.2,747.5 878.5,749.4 874,748.6 C868,747.6 864.2,743 864.4,738 C864.6,734 867,731 870.5,729.3 Z" fill="#fbfbf6"/>
<circle cx="876.2" cy="728.4" r="1.5" fill="#e8fbff"/><circle cx="881" cy="728.2" r="1.3" fill="#e8fbff"/><circle cx="884.8" cy="730" r="1.4" fill="#e8fbff"/>
<!-- system monitor -->
<circle cx="930" cy="738.5" r="20.5" fill="#3b4684" opacity=".35" style="filter:blur(2px)"/>
<circle cx="930" cy="737" r="19.2" fill="url(#gMon)"/>
<path d="M915.4,737.8 A14.8,14.8 0 0 1 945,737.8" fill="none" stroke="url(#gArc)" stroke-width="3.8"/>
<path d="M935.6,721.4 L932.6,738 L928,736.5 Z" fill="#f1e4ee"/>
<circle cx="930.2" cy="738.6" r="4.1" fill="#f0eef2"/>
<!-- indicators -->
<ellipse cx="600" cy="768" rx="4.5" ry="4" fill="url(#gInd)" opacity=".7"/>
<ellipse cx="875.5" cy="768" rx="4.5" ry="4" fill="url(#gInd)" opacity=".7"/>
<ellipse cx="930.3" cy="768" rx="4.5" ry="4" fill="url(#gInd)" opacity=".7"/>
<circle cx="600" cy="767.3" r="1.5" fill="#6fd0ff"/><circle cx="875.5" cy="767.3" r="1.5" fill="#6fd0ff"/><circle cx="930.3" cy="767.3" r="1.5" fill="#6fd0ff"/>
</svg>
</div>
<!-- mouse cursor -->
<svg class="abs" style="left:83px;top:383px" width="16" height="24" viewBox="83 383 16 24">
<path d="M85.5,385.5 L85.5,400.6 L89,397.4 L91.3,402.6 L93.5,401.6 L91.2,396.6 L96,396.4 Z" fill="#1a1a1a" stroke="#f4f4f4" stroke-width="1" stroke-linejoin="round"/>
</svg>

</body>
</html>
